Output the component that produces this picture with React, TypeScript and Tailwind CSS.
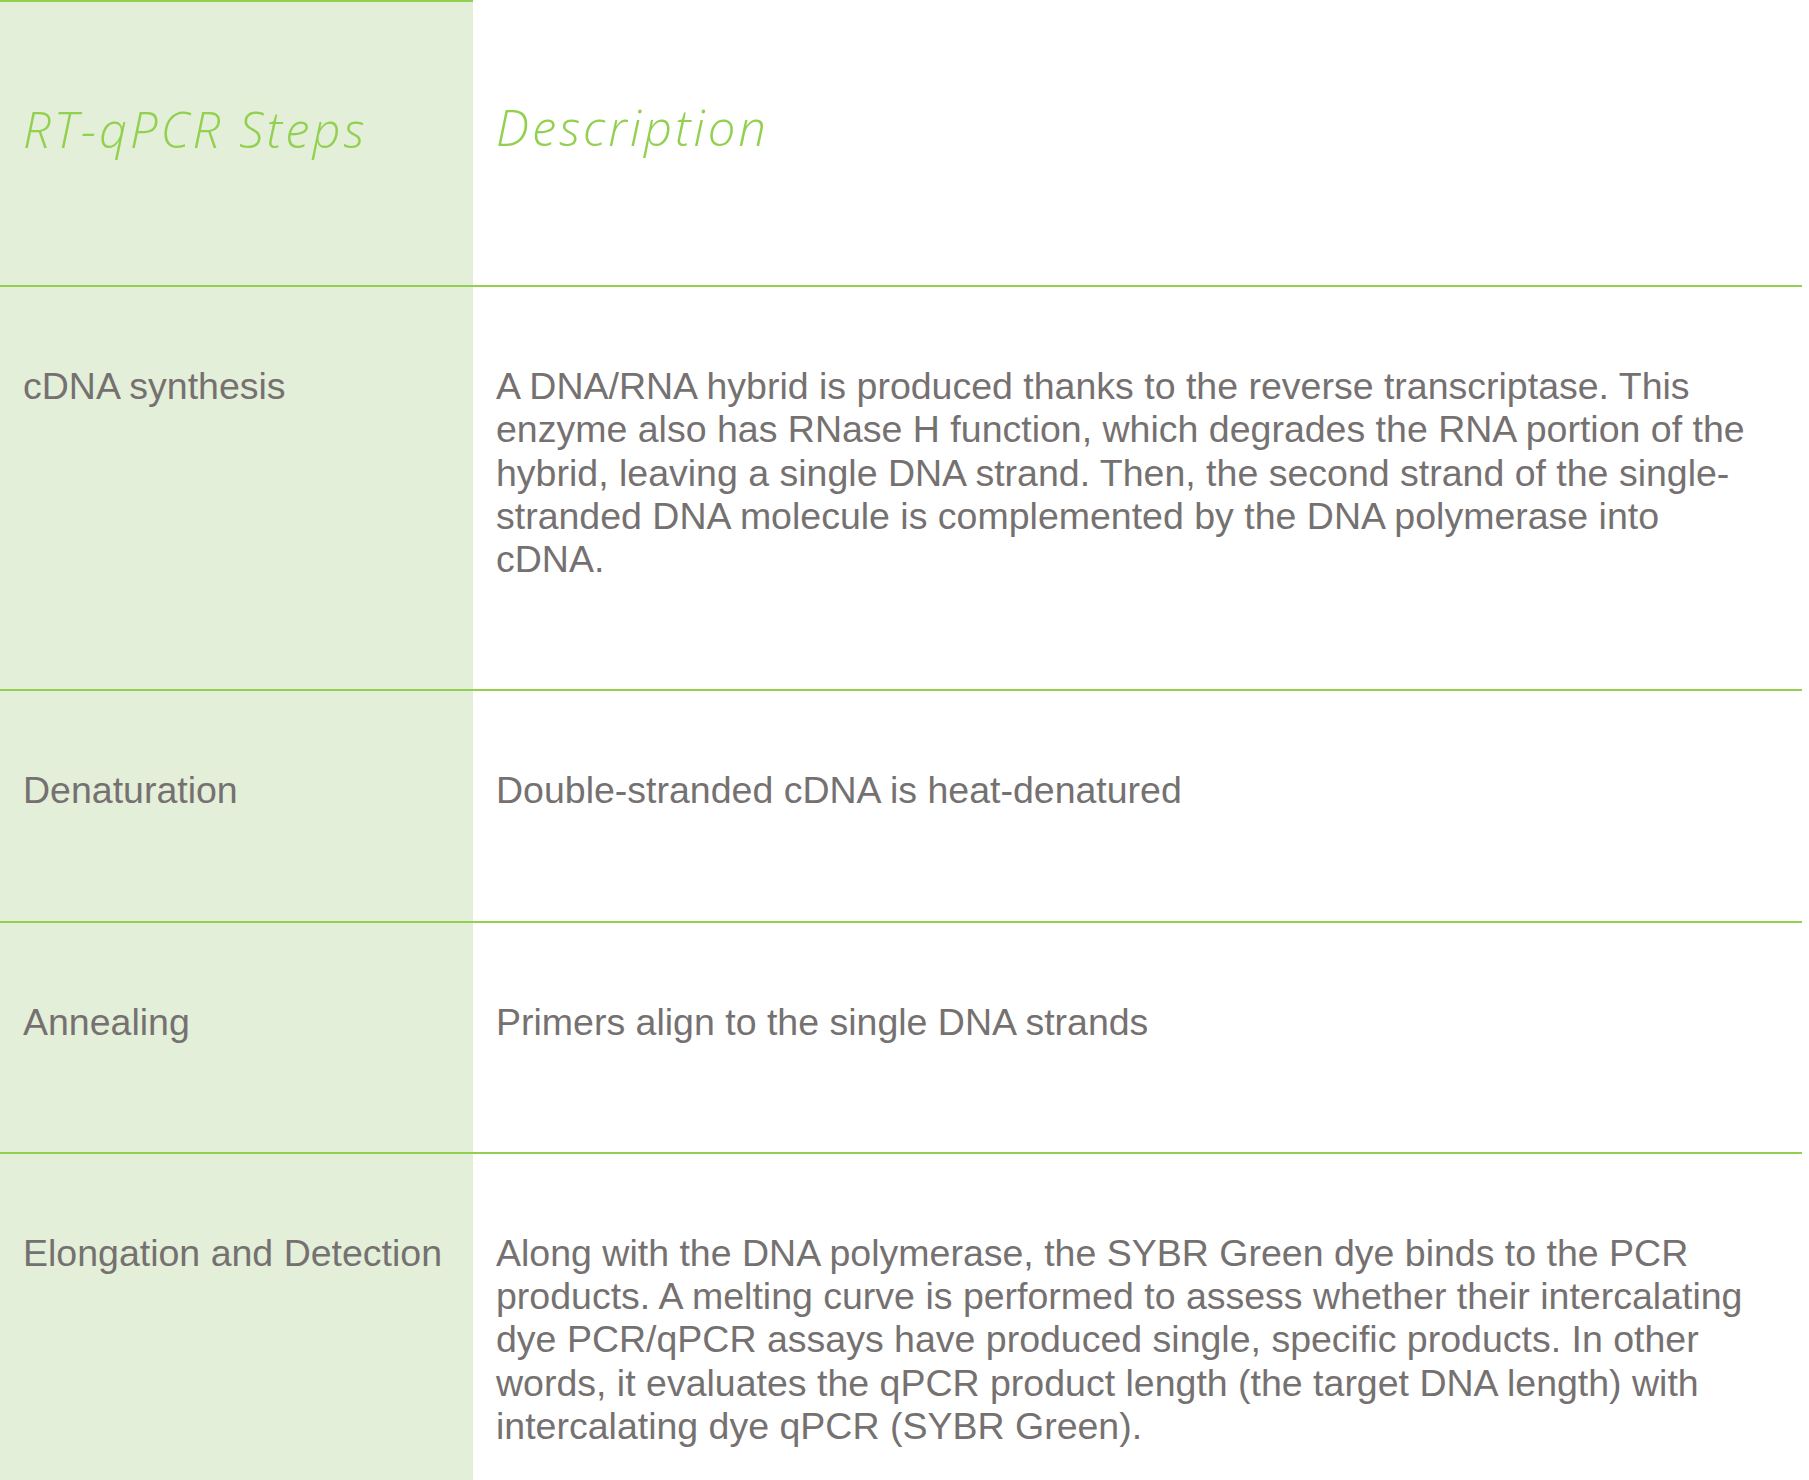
const rows = [
  {
    step: "cDNA synthesis",
    text: "A DNA/RNA hybrid is produced thanks to the reverse transcriptase. This enzyme also has RNase H function, which degrades the RNA portion of the hybrid, leaving a single DNA strand. Then, the second strand of the single-stranded DNA molecule is complemented by the DNA polymerase into cDNA.",
  },
  {
    step: "Denaturation",
    text: "Double-stranded cDNA is heat-denatured",
  },
  {
    step: "Annealing",
    text: "Primers align to the single DNA strands",
  },
  {
    step: "Elongation and Detection",
    text: "Along with the DNA polymerase, the SYBR Green dye binds to the PCR products. A melting curve is performed to assess whether their intercalating dye PCR/qPCR assays have produced single, specific products. In other words, it evaluates the qPCR product length (the target DNA length) with intercalating dye qPCR (SYBR Green).",
  },
];

export default function App() {
  return (
    <div className="min-h-screen bg-white">
      <div className="grid w-[1802px] grid-cols-[473px_1fr]">
        {/* Header */}
        <div className="h-[285px] border-t-2 border-[#92d050] bg-[#e4efd9] pl-[23px] pt-[98px]">
          <h2 className="font-['Open_Sans',sans-serif] text-[49px] font-light italic leading-[58px] tracking-[3px] text-[#92d050]">
            RT-qPCR Steps
          </h2>
        </div>
        <div className="h-[285px] pl-[23px] pt-[98px]">
          <h2 className="font-['Open_Sans',sans-serif] text-[49px] font-light italic leading-[58px] tracking-[3px] text-[#92d050]">
            Description
          </h2>
        </div>

        {rows.map((row) => (
          <div key={row.step} className="contents">
            <div className="border-t-2 border-[#92d050] bg-[#e4efd9] pb-[108px] pl-[23px] pr-[10px] pt-[78px]">
              <p className="font-['Liberation_Sans',Arial,sans-serif] text-[37.5px] leading-[43.25px] text-[#767171]">
                {row.step}
              </p>
            </div>
            <div className="border-t-2 border-[#92d050] pb-[108px] pl-[23px] pr-[42px] pt-[78px]">
              <p className="font-['Liberation_Sans',Arial,sans-serif] text-[37.5px] leading-[43.25px] text-[#767171]">
                {row.text}
              </p>
            </div>
          </div>
        ))}
      </div>
    </div>
  );
}
